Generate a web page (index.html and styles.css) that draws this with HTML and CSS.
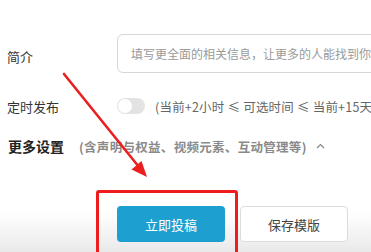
FILE: index.html
```html
<!DOCTYPE html>
<html lang="zh">
<head>
<meta charset="utf-8">
<link rel="stylesheet" href="styles.css">
</head>
<body>
<div class="page">
  <div class="row row-intro">
    <div class="label">简介</div>
    <div class="field">填写更全面的相关信息，让更多的人能找到你的视频吧</div>
  </div>
  <div class="row row-timer">
    <div class="label">定时发布</div>
    <div class="toggle"><span class="knob"></span></div>
    <div class="hint">(当前+2小时 ≤ 可选时间 ≤ 当前+15天)</div>
  </div>
  <div class="row row-more">
    <div class="more-title">更多设置</div>
    <div class="more-sub">(含声明与权益、视频元素、互动管理等)</div>
    <svg class="chev" width="9" height="6" viewBox="0 0 9 6"><path d="M1 5 L4.5 1.5 L8 5" fill="none" stroke="#888" stroke-width="1.2"/></svg>
  </div>
  <div class="row row-actions">
    <div class="btn btn-primary">立即投稿</div>
    <div class="btn btn-plain">保存模版</div>
  </div>
</div>
<div class="annot-box"></div>
<svg class="annot-arrow" width="371" height="252" viewBox="0 0 371 252">
  <line x1="64" y1="74" x2="139" y2="167" stroke="#ea2020" stroke-width="2.6" stroke-linecap="round"/>
  <polygon points="147,177 131.5,169.5 141.5,161" fill="#ea2020"/>
</svg>
</body>
</html>
```
FILE: styles.css
```css
html, body {
  margin: 0;
  padding: 0;
  width: 371px;
  height: 252px;
  overflow: hidden;
}
body {
  position: relative;
  font-family: "Noto Sans CJK SC", "Noto Sans", sans-serif;
  background: linear-gradient(to bottom, #ffffff 0, #ffffff 212px, #e9e9e9 252px);
  color: #333;
}
.page {
  padding: 34px 0 0 7px;
}
.row {
  display: flex;
  align-items: center;
  white-space: nowrap;
}
.label {
  width: 110px;
  flex: none;
  font-size: 13px;
  color: #333;
}
.row-intro .label {
  padding-top: 5px;
}
.field {
  flex: none;
  box-sizing: border-box;
  width: 300px;
  height: 39px;
  border: 1px solid #d6d6d6;
  border-radius: 6px;
  padding-left: 13px;
  display: flex;
  align-items: center;
  font-size: 12px;
  color: #9a9a9a;
  overflow: hidden;
}
.row-timer {
  margin-top: 25px;
  height: 16px;
}
.toggle {
  flex: none;
  width: 28px;
  height: 16px;
  border-radius: 8px;
  background: #e3e3e3;
  position: relative;
}
.knob {
  position: absolute;
  left: 1px;
  top: 1px;
  width: 14px;
  height: 14px;
  border-radius: 50%;
  background: #fff;
}
.hint {
  margin-left: 10px;
  font-size: 12.5px;
  letter-spacing: 0.2px;
  color: #666;
}
.row-more {
  margin-top: 22px;
  height: 20px;
}
.more-title {
  font-size: 14px;
  font-weight: bold;
  color: #222;
  padding-left: 1px;
}
.more-sub {
  margin-left: 15px;
  font-size: 12.5px;
  font-weight: bold;
  letter-spacing: 0.3px;
  color: #8a8a8a;
}
.chev {
  margin-left: 9px;
}
.row-actions {
  margin-top: 50px;
  padding-left: 110px;
  gap: 15px;
}
.btn {
  box-sizing: border-box;
  width: 108px;
  height: 36px;
  border-radius: 4px;
  display: flex;
  align-items: center;
  justify-content: center;
  font-size: 13px;
}
.btn-primary {
  background: #1d9fd0;
  color: #fff;
}
.btn-plain {
  background: #fff;
  border: 1px solid #dcdcdc;
  color: #444;
}
.annot-box {
  position: absolute;
  left: 96px;
  top: 190px;
  width: 136px;
  height: 80px;
  border: 3px solid #ee1c1c;
  border-radius: 3px;
}
.annot-arrow {
  position: absolute;
  left: 0;
  top: 0;
}
```
